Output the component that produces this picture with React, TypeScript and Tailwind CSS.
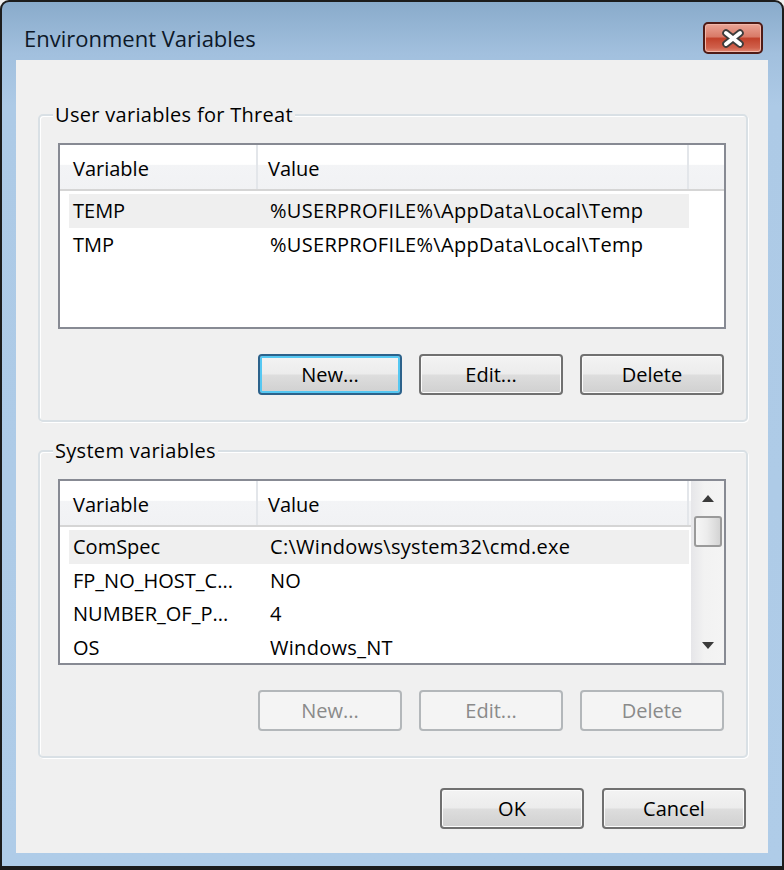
import clsx from "clsx";

const userVars = [
    { name: "TEMP", value: "%USERPROFILE%\\AppData\\Local\\Temp", sel: true },
    { name: "TMP", value: "%USERPROFILE%\\AppData\\Local\\Temp" },
];

const systemVars = [
    { name: "ComSpec", value: "C:\\Windows\\system32\\cmd.exe", sel: true },
    { name: "FP_NO_HOST_C...", value: "NO" },
    { name: "NUMBER_OF_P...", value: "4" },
    { name: "OS", value: "Windows_NT" },
];

function Button({ label, isDefault, disabled }: { label: string; isDefault?: boolean; disabled?: boolean }) {
    return (
        <div
            className={clsx(
                "w-[144px] h-[41px] rounded-[4px] border-2 flex items-center justify-center text-[20px] leading-none",
                disabled
                    ? "border-[#b3b7ba] bg-[#f4f4f4] text-[#8a8a8a]"
                    : "text-black bg-[linear-gradient(#f3f3f3_0%,#ececec_48%,#dddddd_52%,#d0d0d0_100%)]",
                !disabled && !isDefault && "border-[#707070] shadow-[inset_0_0_0_1px_#fbfbfb]",
                isDefault && "border-[#2c628b] shadow-[inset_0_0_0_2px_#56c8f2]"
            )}
        >
            {label}
        </div>
    );
}

function Header({ filler }: { filler: boolean }) {
    return (
        <div className="flex h-[46px] border-b-2 border-[#d5d5d5] bg-[linear-gradient(#ffffff_0%,#ffffff_44%,#f3f4f6_46%,#f1f2f4_100%)] text-[20px]">
            <div className="w-[198px] border-r-2 border-[#e3e6ea] pl-[13px] pt-[4px] flex items-center">Variable</div>
            <div className="w-[431px] border-r-2 border-[#e3e6ea] pl-[10px] pt-[4px] flex items-center">Value</div>
            {filler && <div className="flex-1"></div>}
        </div>
    );
}

function Rows({ rows }: { rows: { name: string; value: string; sel?: boolean }[] }) {
    return (
        <div className="mt-[3px] pl-[9px] flex flex-col">
            {rows.map((r) => (
                <div key={r.name} className={clsx("w-[620px] h-[33.5px] flex items-center text-[20px]", r.sel && "bg-[#efefef]")}>
                    <div className="w-[189px] pl-[4px] pt-[1px] whitespace-nowrap">{r.name}</div>
                    <div className="pl-[12px] pt-[1px] whitespace-nowrap tracking-[0.3px]">{r.value}</div>
                </div>
            ))}
        </div>
    );
}

function ScrollBar() {
    return (
        <div className="w-[33px] flex flex-col items-center bg-[linear-gradient(90deg,#e6e6e9,#f2f2f2_40%,#f4f4f4)]">
            <div className="h-[35px] flex items-center justify-center">
                <svg width="12" height="7" viewBox="0 0 12 7">
                    <path d="M6 0 L12 7 L0 7 Z" fill="#3a3a3a" />
                </svg>
            </div>
            <div className="w-[28px] h-[31px] rounded-[3px] border-2 border-[#9a9a9a] bg-[linear-gradient(90deg,#f6f6f6,#ececec_45%,#d4d4d4)]"></div>
            <div className="flex-1"></div>
            <div className="h-[35px] flex items-center justify-center">
                <svg width="12" height="7" viewBox="0 0 12 7">
                    <path d="M0 0 L12 0 L6 7 Z" fill="#3a3a3a" />
                </svg>
            </div>
        </div>
    );
}

function Group({ title, children, className }: { title: string; children: React.ReactNode; className?: string }) {
    return (
        <div className={clsx("relative border-2 border-[#d9e0e5] rounded-[5px] shadow-[inset_1px_1px_0_#ffffff,1px_1px_0_#ffffff] pt-[27px] pl-[18px] pr-[20px] pb-[25px]", className)}>
            <span className="absolute -top-[15px] left-[13px] px-[2px] bg-[#f0f0f0] text-[20px] leading-[28px] tracking-[0.3px]">{title}</span>
            {children}
        </div>
    );
}

export default function App() {
    return (
        <div className="w-[784px] h-[870px] bg-[#f0f0f0] font-['Open_Sans',sans-serif] text-black">
            <div className="h-full rounded-t-[9px] bg-[#1c1c1c] pt-[2px] px-[2px] pb-[4px]">
                <div className="h-full rounded-t-[7px] bg-[linear-gradient(#89abcb_0%,#a2c0de_6%,#adcae6_12%,#afcce8_100%)] px-[14px] pb-[13px] flex flex-col">
                    <div className="h-[58px] pt-[14px] pl-[8px] pr-[5px] flex items-center justify-between">
                        <span className="text-[22px] text-[#0d1828] leading-none">Environment Variables</span>
                        <div className="w-[60px] h-[32px] rounded-[5px] border-2 border-[#4f1b16] bg-[linear-gradient(#eaa596_0%,#d97a68_45%,#c2422c_52%,#d0614c_85%,#e08a76_100%)] shadow-[inset_0_0_0_1px_#f1b7aa] flex items-center justify-center">
                            <svg width="24" height="19" viewBox="0 0 24 19">
                                <path d="M5 4 L19 15 M19 4 L5 15" stroke="#3c3c3c" strokeWidth="7.5" strokeLinecap="round" />
                                <path d="M5 4 L19 15 M19 4 L5 15" stroke="#ffffff" strokeWidth="4" strokeLinecap="round" />
                            </svg>
                        </div>
                    </div>
                    <div className="flex-1 bg-[#f0f0f0] pl-[22px] pr-[20px] pt-[54px] flex flex-col">
                        <Group title="User variables for Threat">
                            <div className="h-[186px] border-2 border-[#878a93] bg-white">
                                <Header filler />
                                <Rows rows={userVars} />
                            </div>
                            <div className="mt-[25px] pr-[2px] flex justify-end gap-[17px]">
                                <Button label="New..." isDefault />
                                <Button label="Edit..." />
                                <Button label="Delete" />
                            </div>
                        </Group>
                        <Group title="System variables" className="mt-[28px]">
                            <div className="h-[186px] border-2 border-[#878a93] bg-white flex">
                                <div className="flex-1">
                                    <Header filler={false} />
                                    <Rows rows={systemVars} />
                                </div>
                                <ScrollBar />
                            </div>
                            <div className="mt-[25px] pr-[2px] flex justify-end gap-[17px]">
                                <Button label="New..." disabled />
                                <Button label="Edit..." disabled />
                                <Button label="Delete" disabled />
                            </div>
                        </Group>
                        <div className="mt-[30px] pr-[2px] flex justify-end gap-[18px]">
                            <Button label="OK" />
                            <Button label="Cancel" />
                        </div>
                    </div>
                </div>
            </div>
        </div>
    );
}
